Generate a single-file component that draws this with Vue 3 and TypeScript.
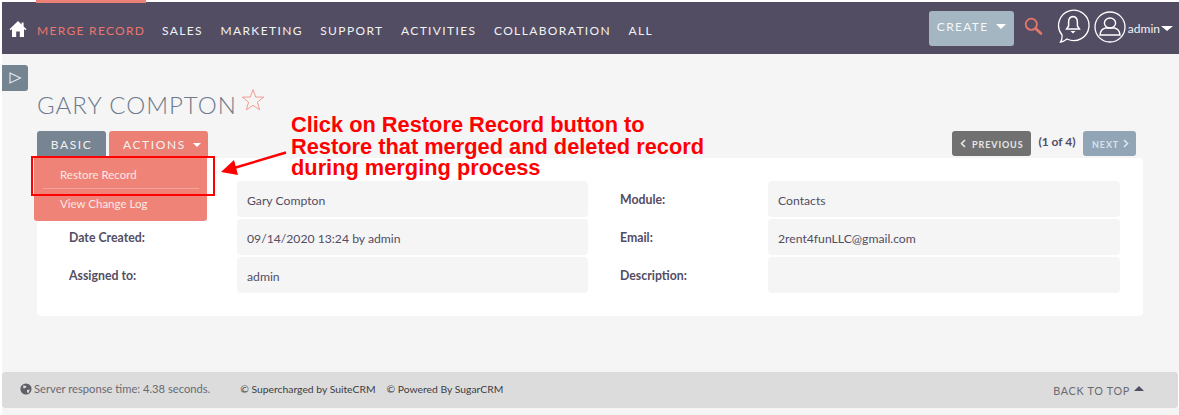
<script setup lang="ts">
const navItems: string[] = ['SALES', 'MARKETING', 'SUPPORT', 'ACTIVITIES', 'COLLABORATION', 'ALL']
const rows: { l1: string; v1: string; l2: string; v2: string }[] = [
  { l1: '', v1: 'Gary Compton', l2: 'Module:', v2: 'Contacts' },
  { l1: 'Date Created:', v1: '09/14/2020 13:24 by admin', l2: 'Email:', v2: '2rent4funLLC@gmail.com' },
  { l1: 'Assigned to:', v1: 'admin', l2: 'Description:', v2: '' },
]
</script>

<template>
  <div class="page">
    <header class="nav">
      <svg class="home" width="18" height="18" viewBox="0 0 18 18">
        <path d="M9 1 L0.5 9.2 L1.6 10.2 L3 9 V17 H7.2 V11.5 H10.8 V17 H15 V9 L16.4 10.2 L17.5 9.2 L14.6 6.4 V2.4 H12.6 V4.5 Z" fill="#fff" />
      </svg>
      <div class="active">MERGE RECORD</div>
      <div v-for="n in navItems" :key="n" class="nav-item">{{ n }}</div>
      <div class="spacer"></div>
      <div class="create">CREATE <span class="caret white"></span></div>
      <svg class="search" width="20" height="20" viewBox="0 0 20 20">
        <circle cx="7.3" cy="7.3" r="5.6" fill="none" stroke="#e8766c" stroke-width="1.8" />
        <path d="M11.5 11.5 L17 16.5" stroke="#e8766c" stroke-width="2.6" stroke-linecap="round" />
      </svg>
      <svg class="bell" width="34" height="38" viewBox="0 0 34 38">
        <path d="M6 27 A15.2 15.2 0 1 1 11 31 Q8 33.5 4.5 34 Q6.5 31 6 27 Z" fill="none" stroke="#fff" stroke-width="1.3" />
        <path d="M17 8.5 Q12.6 9 12.6 14 V18 L10.6 21 H23.4 L21.4 18 V14 Q21.4 9 17 8.5 Z" fill="none" stroke="#fff" stroke-width="1.5" />
        <path d="M14.5 23 H19.5 L17 25.5 Z" fill="#fff" />
      </svg>
      <svg class="user" width="32" height="32" viewBox="0 0 32 32">
        <circle cx="16" cy="16" r="15" fill="none" stroke="#fff" stroke-width="1.3" />
        <ellipse cx="16" cy="12" rx="5.6" ry="5" fill="none" stroke="#fff" stroke-width="1.4" />
        <path d="M6 24 Q6.5 18 11.5 17 H20.5 Q25.5 18 26 24 Z" fill="none" stroke="#fff" stroke-width="1.4" />
      </svg>
      <div class="admin">admin<span class="caret white big"></span></div>
    </header>

    <main class="main">
      <div class="side-toggle">
        <svg width="13" height="12" viewBox="0 0 13 12"><path d="M1 1 L11.5 6 L1 11 Z" fill="none" stroke="#e8edf2" stroke-width="1.1" /></svg>
      </div>
      <div class="title-row">
        <h1 class="title">GARY COMPTON</h1>
        <svg class="star" width="24" height="24" viewBox="0 0 24 24">
          <path d="M12 1.5 L14.7 9 L22.7 9.2 L16.4 14.1 L18.6 21.8 L12 17.3 L5.4 21.8 L7.6 14.1 L1.3 9.2 L9.3 9 Z" fill="none" stroke="#f0918a" stroke-width="0.9" />
        </svg>
      </div>
      <div class="tab-row">
        <div class="tab basic">BASIC</div>
        <div class="tab actions">ACTIONS <span class="caret white small"></span></div>
        <div class="spacer"></div>
        <div class="pager prev">
          <svg width="6" height="9" viewBox="0 0 6 9"><path d="M5 1 L1.5 4.5 L5 8" fill="none" stroke="#ececec" stroke-width="1.5" /></svg>
          <span>PREVIOUS</span>
        </div>
        <div class="count">(1 of 4)</div>
        <div class="pager next">
          <span>NEXT</span>
          <svg width="6" height="9" viewBox="0 0 6 9"><path d="M1 1 L4.5 4.5 L1 8" fill="none" stroke="#dfe6ec" stroke-width="1.5" /></svg>
        </div>
      </div>
      <section class="panel">
        <template v-for="r in rows" :key="r.v1">
          <div class="label first">{{ r.l1 }}</div>
          <div class="value">{{ r.v1 }}</div>
          <div class="label second">{{ r.l2 }}</div>
          <div class="value">{{ r.v2 }}</div>
        </template>
      </section>
    </main>

    <footer class="footer">
      <svg class="globe" width="12" height="12" viewBox="0 0 12 12">
        <circle cx="6" cy="6" r="5.6" fill="#5f5f68" />
        <path d="M3 2.5 L6.5 3 L5.5 5 L3.5 5.5 Z M7 7 L9.8 6.5 L8.5 10 L7 9.5 Z" fill="#dcdcdc" />
      </svg>
      <span class="resp">Server response time: 4.38 seconds.</span>
      <span class="copy c1">© Supercharged by SuiteCRM</span>
      <span class="copy c2">© Powered By SugarCRM</span>
      <div class="spacer"></div>
      <span class="top">BACK TO TOP</span>
      <span class="caret dark"></span>
    </footer>
    <div class="foot-gap"></div>

    <div class="menu">
      <div class="menu-item one">Restore Record</div>
      <div class="menu-item two">View Change Log</div>
    </div>
    <div class="redbox"></div>
    <svg class="arrow" width="70" height="30" viewBox="0 0 70 30">
      <path d="M66 1.5 L14 17" stroke="#f00" stroke-width="2.4" />
      <path d="M1 21 L14 9 L18 24 Z" fill="#f00" />
    </svg>
    <div class="note">Click on Restore Record button to<br />Restore that merged and deleted record<br />during merging process</div>
  </div>
</template>

<style>
html, body { margin: 0; padding: 0; background: #fff; }
</style>

<style scoped>
.page {
  position: relative;
  width: 1179px;
  height: 415px;
  overflow: hidden;
  box-sizing: border-box;
  padding: 2px 0 0 2px;
  background: #fff;
  font-family: Lato, "Open Sans", sans-serif;
  color: #534d64;
}
.nav {
  height: 52px;
  background: #534d64;
  display: flex;
  align-items: center;
  position: relative;
}
.spacer { flex: 1; }
.home { margin-left: 7px; margin-top: 2px; flex: none; }
.active {
  margin-left: 10px;
  height: 52px;
  line-height: 57px;
  width: 109px;
  box-sizing: border-box;
  font-size: 12px;
  letter-spacing: 1.3px;
  color: #e8766c;
  white-space: nowrap;
  position: relative;
}
.active::before {
  content: "";
  position: absolute;
  left: -1px;
  right: 0;
  top: -2px;
  height: 3px;
  background: #ea8076;
}
.nav-item {
  margin-left: 17.4px;
  font-size: 12px;
  letter-spacing: 1.38px;
  color: #f2f2f2;
  white-space: nowrap;
  padding-top: 5px;
}
.active + .nav-item { margin-left: 16px; }
.create {
  width: 85px;
  height: 35px;
  background: #a5b6c3;
  border-radius: 3px;
  color: #f5f7f9;
  font-size: 12px;
  letter-spacing: 1.33px;
  line-height: 32px;
  text-align: center;
  white-space: nowrap;
}
.caret {
  display: inline-block;
  width: 0;
  height: 0;
  border-left: 5px solid transparent;
  border-right: 5px solid transparent;
  border-top: 5px solid #fff;
  vertical-align: 2px;
  margin-left: 3px;
}
.caret.small { border-left-width: 4.5px; border-right-width: 4.5px; border-top-width: 4.5px; margin-left: 4px; }
.caret.big { border-left-width: 6px; border-right-width: 6px; border-top-width: 5px; margin-left: 1px; vertical-align: 2px; }
.search { margin-left: 10px; margin-top: -2px; flex: none; }
.bell { margin-left: 12px; margin-top: -3px; flex: none; }
.user { margin-left: 4px; margin-top: -3px; flex: none; }
.admin {
  color: #f2f2f2;
  font-size: 12px;
  margin-left: 2px;
  margin-right: 6px;
  padding-top: 1px;
  white-space: nowrap;
}
.main {
  height: 318px;
  box-sizing: border-box;
  background: #f5f5f5;
  padding-top: 11px;
  position: relative;
}
.side-toggle {
  width: 26px;
  height: 26px;
  background: #758491;
  border-radius: 0 3px 3px 0;
  display: flex;
  align-items: center;
  justify-content: center;
}
.title-row {
  display: flex;
  align-items: flex-start;
  margin: -1px 0 0 35px;
  height: 41px;
}
.title {
  margin: 0;
  font-weight: 300;
  font-size: 24px;
  line-height: 29px;
  letter-spacing: 1px;
  color: #6d7a8c;
  white-space: nowrap;
}
.star { margin: -2px 0 0 4px; flex: none; }
.tab-row {
  display: flex;
  align-items: flex-start;
  height: 27px;
  margin-left: 35px;
  margin-right: 43px;
}
.tab {
  height: 27px;
  box-sizing: border-box;
  border-radius: 3px 3px 0 0;
  color: #f2f2f2;
  font-size: 12px;
  letter-spacing: 1.6px;
  line-height: 27px;
  white-space: nowrap;
}
.basic { width: 69px; background: #778491; text-align: center; }
.actions { width: 99px; margin-left: 3px; background: #ec8074; padding-left: 14px; }
.actions .caret { margin-left: 2px; }
.pager {
  height: 25px;
  box-sizing: border-box;
  border-radius: 3px;
  font-size: 9px;
  font-weight: 700;
  letter-spacing: 0.9px;
  color: #e6e6e6;
  display: flex;
  align-items: center;
  gap: 5px;
  white-space: nowrap;
}
.pager span { padding-top: 1px; }
.prev { width: 79px; background: #717171; padding-left: 8px; gap: 6px; }
.next { width: 53px; background: #92a5b6; color: #d9e2ea; padding-left: 9px; gap: 4px; }
.count {
  width: 52px;
  text-align: center;
  font-size: 12px;
  font-weight: 700;
  line-height: 22px;
  white-space: nowrap;
}
.panel {
  margin-left: 35px;
  width: 1106px;
  height: 158px;
  box-sizing: border-box;
  background: #fff;
  border-radius: 0 4px 4px 4px;
  padding: 23px 23px 0 0;
  display: grid;
  grid-template-columns: 200px 351px 180px 352px;
  grid-auto-rows: 36px;
  row-gap: 2px;
}
.label {
  font-size: 12.3px;
  font-weight: 700;
  line-height: 38px;
  color: #534d64;
}
.first { padding-left: 32px; }
.second { padding-left: 32px; }
.value {
  background: #f5f5f5;
  border-radius: 4px;
  font-size: 12.2px;
  line-height: 40px;
  padding-left: 10px;
  color: #534d64;
}
.footer {
  height: 36px;
  width: 1176px;
  background: #dcdcdc;
  border-radius: 3px;
  display: flex;
  align-items: center;
  font-size: 11.2px;
  color: #6a6a72;
  white-space: nowrap;
  box-sizing: border-box;
  padding: 0 34px 0 18px;
}
.globe { flex: none; margin-top: -2px; }
.resp { margin-left: 2px; margin-top: -3px; }
.copy { font-size: 10.35px; color: #3c3c44; margin-top: -2px; }
.c1 { margin-left: 30px; }
.c2 { margin-left: 11px; }
.top { font-size: 10.8px; letter-spacing: 0.7px; color: #6a6a72; margin-top: 1px; }
.caret.dark {
  border-top: 0;
  border-bottom: 5px solid #534d64;
  margin-left: 4px;
  margin-top: -4px;
  vertical-align: 0;
}
.foot-gap { height: 7px; background: #f5f5f5; }
.menu {
  position: absolute;
  left: 34px;
  top: 157px;
  width: 173px;
  height: 64px;
  background: #f08378;
  border-radius: 0 0 3px 3px;
  color: #f8e9e6;
  font-size: 11.5px;
}
.menu-item { padding-left: 26px; height: 32px; line-height: 36px; box-sizing: border-box; }
.one { position: relative; }
.one::after {
  content: "";
  position: absolute;
  left: 9px;
  right: 8px;
  bottom: 0;
  height: 1px;
  background: #f6a49b;
}
.two { line-height: 29px; }
.redbox {
  position: absolute;
  left: 31px;
  top: 156px;
  width: 184px;
  height: 40px;
  box-sizing: border-box;
  border: 2.6px solid #f00;
}
.arrow { position: absolute; left: 220px; top: 151px; }
.note {
  position: absolute;
  left: 291px;
  top: 114px;
  color: #f00;
  font-family: "Liberation Sans", Arial, sans-serif;
  font-weight: 700;
  font-size: 21.8px;
  line-height: 21.7px;
  white-space: nowrap;
}
</style>
